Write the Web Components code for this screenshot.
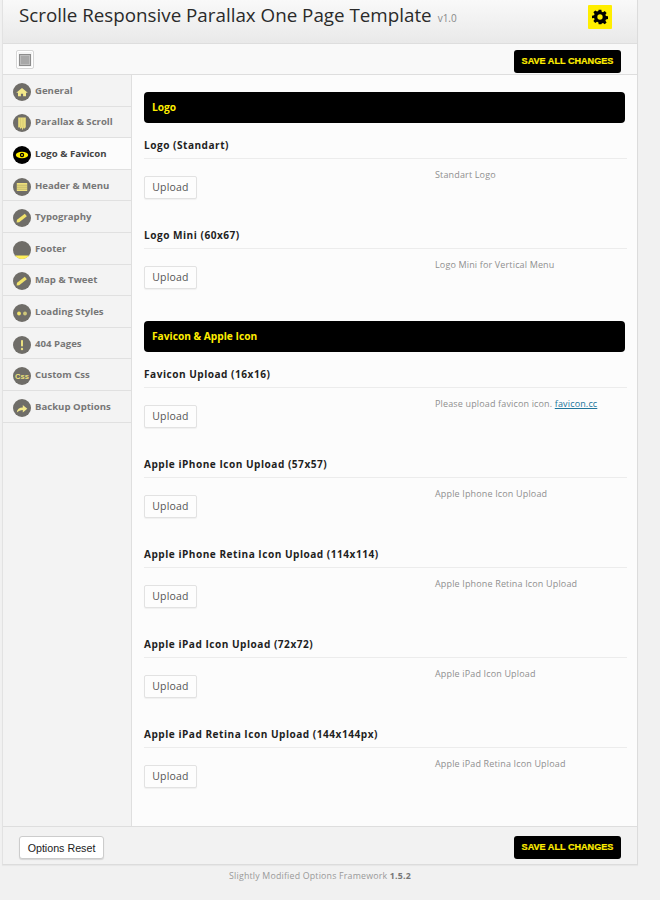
<!DOCTYPE html>
<html><head><meta charset="utf-8">
<style>
html,body{margin:0;padding:0;background:#f1f1f1;font-family:"Open Sans",sans-serif;}
</style></head><body>
<opt-shell>
  <span slot="title">Scrolle Responsive Parallax One Page Template</span>
  <span slot="version">v1.0</span>
  <side-nav slot="nav">
    <nav-item icon="home">General</nav-item>
    <nav-item icon="scroll">Parallax &amp; Scroll</nav-item>
    <nav-item icon="eye" active>Logo &amp; Favicon</nav-item>
    <nav-item icon="menu">Header &amp; Menu</nav-item>
    <nav-item icon="pencil">Typography</nav-item>
    <nav-item icon="footer">Footer</nav-item>
    <nav-item icon="pencil">Map &amp; Tweet</nav-item>
    <nav-item icon="dots">Loading Styles</nav-item>
    <nav-item icon="warn">404 Pages</nav-item>
    <nav-item icon="css">Custom Css</nav-item>
    <nav-item icon="share">Backup Options</nav-item>
  </side-nav>
  <section-bar>Logo</section-bar>
  <option-row name="Logo (Standart)">Standart Logo</option-row>
  <option-row name="Logo Mini (60x67)">Logo Mini for Vertical Menu</option-row>
  <section-bar class="later">Favicon &amp; Apple Icon</section-bar>
  <option-row name="Favicon Upload (16x16)">Please upload favicon icon. <a href="#" style="color:#21759b">favicon.cc</a></option-row>
  <option-row name="Apple iPhone Icon Upload (57x57)">Apple Iphone Icon Upload</option-row>
  <option-row name="Apple iPhone Retina Icon Upload (114x114)">Apple Iphone Retina Icon Upload</option-row>
  <option-row name="Apple iPad Icon Upload (72x72)">Apple iPad Icon Upload</option-row>
  <option-row name="Apple iPad Retina Icon Upload (144x144px)">Apple iPad Retina Icon Upload</option-row>
</opt-shell>
<opt-credit>Slightly Modified Options Framework <b>1.5.2</b></opt-credit>
<script>
const ICONS={
home:'<path d="M9 5 3.200 9.800h1.800v3.400h2.900v-2.500h2.200v2.500H13V9.800h1.800z" fill="#f3e88a"/>',
scroll:'<path d="M5.200 3.500h7.600v9.500l-1.200 1.800-1-1.200-1 2.600-1-2.600-1 1.400-1-1.800-1.400.4z" fill="#e9dc7c"/><path d="M7.500 4v9M10 4v9" stroke="#cfc36e" stroke-width=".6"/>',
eye:'<ellipse cx="9" cy="9" rx="6.200" ry="3.200" fill="#ffee00"/><circle cx="9" cy="9" r="2.200" fill="#000"/><circle cx="9" cy="9" r=".9" fill="#ffee00"/>',
menu:'<rect x="3.800" y="5" width="10.400" height="8" fill="#eee07c"/><path d="M3.800 7.200h10.400M3.800 9.200h10.400M3.800 11.200h10.400" stroke="#a09a62" stroke-width=".6"/>',
pencil:'<path d="M4 10.800 11.800 4.800l2 2.400-7.600 6-2.600.3z" fill="#f0e26a"/>',
footer:'<path d="M1.900 14.500h14.200A9 9 0 0 1 9 18a9 9 0 0 1-7.100-3.500z" fill="#ffef5a"/>',
dots:'<circle cx="6" cy="9.500" r="1.900" fill="#f0e26a"/><circle cx="12" cy="9.500" r="1.900" fill="#cfc77a"/>',
warn:'<rect x="8" y="4" width="2" height="6.500" rx=".8" fill="#eadf80"/><circle cx="9" cy="13" r="1.200" fill="#eadf80"/>',
css:'<text x="9" y="11.700" text-anchor="middle" font-family="Liberation Sans,sans-serif" font-weight="700" font-size="7.500" fill="#eee27a">Css</text>',
share:'<path d="M3.800 13.500c.3-3.200 2.500-5 6-5V6l4.500 3.800-4.500 3.700v-2.600c-2.500 0-4.300.8-6 2.600z" fill="#f3e88a"/>'
};
function el(tag,tpl){customElements.define(tag,class extends HTMLElement{
  constructor(){super();const s=this.attachShadow({mode:'open'});s.innerHTML=typeof tpl==='function'?tpl(this):tpl;}
});}
const SAVE=`<button class="save">SAVE ALL CHANGES</button>`;
const SAVECSS=`.save{box-sizing:border-box;width:107px;height:23px;background:#000;color:#ffee00;border:0;border-radius:3px;padding:0;font:700 9.100px/23px "Liberation Sans",sans-serif;-webkit-text-stroke:.2px #ffee00}`;
el('opt-shell',`<style>
:host{display:block;box-sizing:border-box;width:636px;height:865px;margin-left:2px;border:1px solid #dcdcdc;border-top:0;border-left-color:#e2e2e2;background:#f2f2f2;box-shadow:0 1px 1px rgba(0,0,0,.04)}
.wrap{display:grid;grid-template-rows:43px 1px 30px 1px 751px 1px 1fr;height:100%}
header{display:flex;align-items:flex-start;background:linear-gradient(#f9f9f9,#e9e9e9);padding-left:16px;padding-right:25px}
h1{margin:0;font:400 18.800px/30px "Open Sans",sans-serif;color:#2a2a2a;flex:1;white-space:nowrap;display:flex;align-items:baseline;gap:6px}
.ver{font-size:10px;color:#888;font-weight:400}
.gear{width:24px;height:24px;background:#ffee00;margin-top:5px;display:flex;align-items:center;justify-content:center;border-radius:1px}
.line{background:#dedede}
.tool{display:flex;align-items:flex-start;justify-content:space-between;background:#f9f9f9;padding:6px 16px 0 13px}
.sq{box-sizing:border-box;width:18px;height:19px;border:1px solid #d6d6d6;border-radius:2px;background:#f4f4f4;display:flex;align-items:center;justify-content:center;box-shadow:inset 0 0 0 1px #fff}
.sq i{display:block;width:12px;height:12px;background:#a8a8a8;border:1px solid #8c8c8c;box-shadow:inset 0 0 0 1px #bcbcbc;box-sizing:border-box}
.main{display:grid;grid-template-columns:129px 1fr;min-height:0}
.nav{background:#f3f3f3;border-right:1px solid #dfdfdf;overflow:hidden}
.content{background:#fcfcfc;padding:17px 10px 0 12px}
.foot{display:flex;align-items:flex-start;justify-content:space-between;padding:9px 16px 0 16px;background:#f2f2f2}
.reset{box-sizing:border-box;width:85px;height:23px;background:#fff;border:1px solid #ccc;border-radius:3px;box-shadow:0 1px 1px rgba(0,0,0,.12);color:#222;padding:0;font:400 10.700px/18px "Liberation Sans",sans-serif}
${SAVECSS}
</style>
<div class="wrap">
<header><h1><slot name="title"></slot><span class="ver"><slot name="version"></slot></span></h1>
<div class="gear"><svg width="16" height="16" viewBox="0 0 24 24"><path fill="#000" fill-rule="evenodd" d="M10 1h4l.6 3.100 1.900.8 2.600-1.800 2.800 2.800-1.800 2.600.8 1.900 3.100.6v4l-3.100.6-.8 1.900 1.800 2.600-2.800 2.800-2.600-1.800-1.900.8L14 23h-4l-.6-3.100-1.900-.8-2.600 1.800-2.800-2.800 1.800-2.600-.8-1.900L0 14v-4l3.100-.6.8-1.900-1.800-2.600 2.800-2.800 2.600 1.800 1.900-.8zM12 8a4 4 0 1 0 0 8 4 4 0 0 0 0-8z"/></svg></div></header>
<div class="line"></div>
<div class="tool"><div class="sq"><i></i></div>${SAVE}</div>
<div class="line"></div>
<div class="main"><div class="nav"><slot name="nav"></slot></div><div class="content"><slot></slot></div></div>
<div class="line"></div>
<div class="foot"><button class="reset">Options Reset</button>${SAVE}</div>
</div>`);
el('opt-credit',`<style>
:host{display:block;width:636px;margin-left:2px;padding-top:5px;text-align:center;font:400 8.800px/13px "Open Sans",sans-serif;color:#999;letter-spacing:.2px}
::slotted(b){color:#777}
</style><slot></slot>`);
el('side-nav',`<style>:host{display:block}</style><slot></slot>`);
el('nav-item',h=>{const a=h.hasAttribute('active');const n=h.getAttribute('icon');
const bg=a?'#000':'#6f6d68';
return `<style>
:host{display:block;box-sizing:border-box;height:31.600px;border-bottom:1px solid #e0e0e0;${a?'background:#fcfcfc;':''}}
.r{display:flex;align-items:center;gap:4px;height:100%;padding:0 0 0 10px;box-sizing:border-box}
svg{flex:none;margin-top:3px}
span{font:700 9.600px/14px "Open Sans",sans-serif;color:${a?'#444':'#777'};white-space:nowrap;margin-top:1px}
</style><div class="r"><svg width="18" height="18" viewBox="0 0 18 18"><circle cx="9" cy="9" r="9" fill="${bg}"/>${ICONS[n]}</svg><span><slot></slot></span></div>`});
el('section-bar',`<style>
:host{display:block;box-sizing:border-box;height:31px;background:#000;color:#ffee00;border-radius:4px;width:481px;font:700 10.200px/30px "Open Sans",sans-serif;padding-left:8px}
:host(.later){margin-top:18px}
</style><slot></slot>`);
el('option-row',h=>`<style>
:host{display:block;height:90px;box-sizing:border-box}
h4{margin:0;height:35px;box-sizing:border-box;padding-top:14px;font:700 10.100px/16px "Open Sans",sans-serif;color:#1f1f1f;letter-spacing:.5px;white-space:nowrap}
hr{margin:0;border:0;height:1px;background:#ececec;width:483px}
.b{display:grid;grid-template-columns:291px 1fr;padding-top:15px}
button{box-sizing:border-box;width:53px;height:23px;background:#fdfdfd;border:1px solid #e2e2e2;border-radius:2px;box-shadow:0 1px 1px rgba(0,0,0,.05);padding:0;color:#555;font:400 10.500px/20px "Open Sans",sans-serif;letter-spacing:.2px}
p{margin:-6px 0 0;font:400 9px/14px "Open Sans",sans-serif;color:#8f8f8f;letter-spacing:.15px;white-space:nowrap}
</style><h4>${h.getAttribute('name')}</h4><hr><div class="b"><div><button>Upload</button></div><p><slot></slot></p></div>`);
</script>
</body></html>
